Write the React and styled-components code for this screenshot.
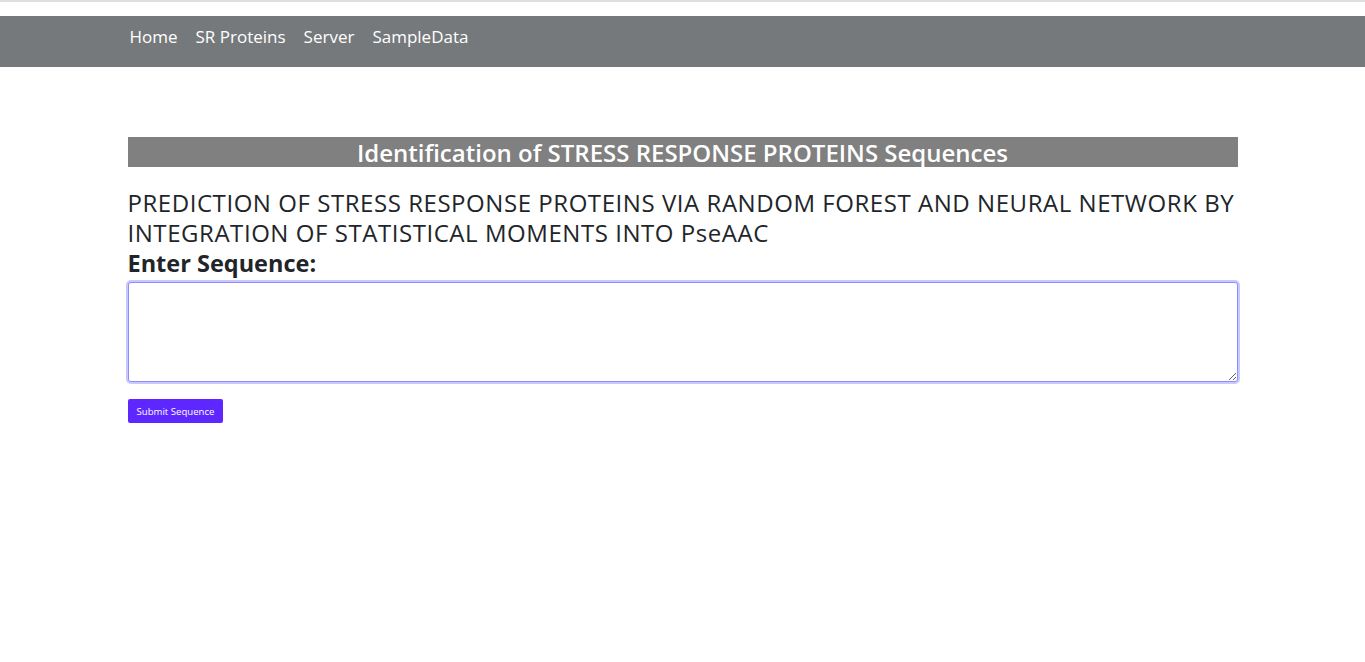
import { useState } from 'react';
import styled, { createGlobalStyle } from 'styled-components';

const GlobalStyle = createGlobalStyle`
  body {
    margin: 0;
    font-family: "Open Sans", "Noto Sans", sans-serif;
    color: #212529;
    background: #fff;
  }
`;

const TopRule = styled.div`
  height: 2px;
  background: #dfe0e3;
  margin-bottom: 14px;
`;

const NavBar = styled.nav`
  background: #76797b;
  height: 51px;
`;

const Container = styled.div`
  width: 1110px;
  margin: 0 auto;
`;

const NavList = styled.ul`
  display: flex;
  align-items: center;
  gap: 18px;
  height: 41px;
  margin: 0;
  padding: 0 0 0 2px;
  list-style: none;
`;

const NavLink = styled.a`
  color: #fff;
  font-size: 17px;
  text-decoration: none;
  cursor: pointer;
`;

const Main = styled(Container)`
  padding-top: 70px;
`;

const Banner = styled.h2`
  margin: 0;
  height: 30px;
  background: #808080;
  color: #fff;
  font-size: 24px;
  font-weight: 600;
  line-height: 32px;
  text-align: center;
`;

const Subtitle = styled.h4`
  margin: 21px 0 0;
  font-size: 24px;
  font-weight: 400;
  letter-spacing: 0.55px;
  line-height: 30px;
`;

const Label = styled.label`
  display: block;
  font-size: 23.5px;
  font-weight: 700;
  line-height: 30px;
  margin-bottom: 4px;
`;

const SequenceInput = styled.textarea`
  display: block;
  box-sizing: border-box;
  width: 100%;
  height: 100px;
  padding: 6px 8px;
  border: 1px solid #8c8cff;
  border-radius: 3px;
  box-shadow: 0 0 0 2px #c9c9ff;
  outline: none;
  font-family: inherit;
  font-size: 14px;
  color: #212529;
  resize: vertical;
`;

const SubmitButton = styled.button`
  margin-top: 17px;
  height: 24px;
  padding: 0 9px;
  border: none;
  border-radius: 2px;
  background: #5f27ff;
  color: #fff;
  font-family: inherit;
  font-size: 9.6px;
  cursor: pointer;
`;

const links = ['Home', 'SR Proteins', 'Server', 'SampleData'];

const App = () => {
  const [sequence, setSequence] = useState('');

  return (
    <>
      <GlobalStyle />
      <TopRule />
      <NavBar>
        <Container>
          <NavList>
            {links.map((link) => (
              <li key={link}>
                <NavLink>{link}</NavLink>
              </li>
            ))}
          </NavList>
        </Container>
      </NavBar>
      <Main>
        <Banner>Identification of STRESS RESPONSE PROTEINS Sequences</Banner>
        <Subtitle>
          PREDICTION OF STRESS RESPONSE PROTEINS VIA RANDOM FOREST AND NEURAL NETWORK BY
          INTEGRATION OF STATISTICAL MOMENTS INTO PseAAC
        </Subtitle>
        <Label htmlFor="sequence">Enter Sequence:</Label>
        <SequenceInput
          id="sequence"
          autoFocus
          value={sequence}
          onChange={(e) => setSequence(e.target.value)}
        />
        <SubmitButton type="button">Submit Sequence</SubmitButton>
      </Main>
    </>
  );
};

export default App;
